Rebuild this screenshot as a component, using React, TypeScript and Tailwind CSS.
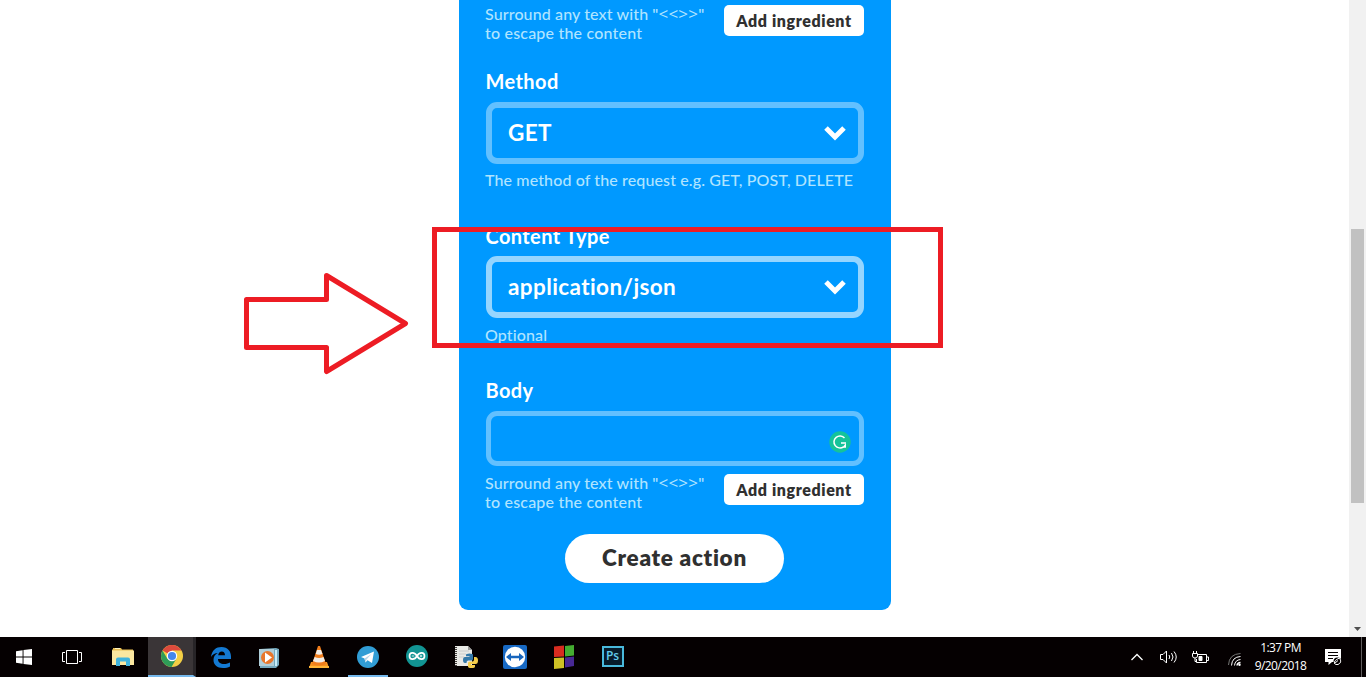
import type { ReactNode } from "react";

function Help({ children }: { children: ReactNode }) {
  return (
    <p className="-mt-px mb-px -ml-px text-[16px] leading-[19px] font-medium tracking-[0.12px] whitespace-nowrap text-[#b0e4ff] [font-variant-ligatures:none]">
      {children}
    </p>
  );
}

function Label({ children }: { children: ReactNode }) {
  return (
    <div className="-mt-px mb-px -ml-[0.5px] h-6 text-[20px] leading-6 font-bold tracking-[0.4px] whitespace-nowrap text-white">
      {children}
    </div>
  );
}

function Select({ value, active }: { value: string; active?: boolean }) {
  return (
    <button
      className={`flex h-[62px] w-full items-center justify-between rounded-[11px] border-6 pr-3 pl-4 text-[22.5px] font-bold text-white ${
        active ? "border-[#95d5ff]" : "border-[#62c0ff]"
      }`}
    >
      <span className="-mt-px tracking-[0.4px] [font-variant-ligatures:none]">{value}</span>
      <svg width="22" height="16" viewBox="0 0 22 16" fill="none" stroke="white" strokeWidth="5">
        <path d="M2 3 11 12 20 3" />
      </svg>
    </button>
  );
}

function IngredientRow() {
  return (
    <div className="flex h-[38px] items-start justify-between">
      <Help>
        Surround any text with "
        <span className="font-['Open_Sans',sans-serif] text-[17px] leading-none font-normal tracking-[0.2px]">&lt;&lt;&gt;&gt;</span>"
        <br />
        <span className="tracking-[0.2px]">to escape the content</span>
      </Help>
      <button className="h-[31px] w-[140px] shrink-0 rounded-[5px] bg-white text-[16px] font-extrabold tracking-[0.6px] whitespace-nowrap text-[#303030]">
        Add ingredient
      </button>
    </div>
  );
}

function TaskItem({ children, className = "" }: { children: ReactNode; className?: string }) {
  return <div className={`flex h-10 w-[49px] shrink-0 items-center justify-center ${className}`}>{children}</div>;
}

function Taskbar() {
  return (
    <footer className="flex h-10 items-center bg-[#050001] text-white">
      <TaskItem className="pr-px">
        <svg width="16" height="16" viewBox="0 0 16 16" fill="white">
          <path d="M0 2.2 6.6 1.2V7.6H0ZM7.5 1 16 0V7.6H7.5ZM0 8.4H6.6V14.8L0 13.8ZM7.5 8.4H16V16L7.5 15Z" />
        </svg>
      </TaskItem>
      <TaskItem className="pr-1">
        <svg width="20" height="14" viewBox="0 0 20 14" fill="none" stroke="white">
          <path d="M4.5.5H15.500V13.500H4.500ZM3 2.500H.5V11.500H3M17 2.500H19.500V11.500H17" />
        </svg>
      </TaskItem>
      <TaskItem>
        <svg width="22" height="18" viewBox="0 0 22 18">
          <path d="M0 1.500H1V0H9L10 1.500H21V16.500H0Z" fill="#e9bf55" />
          <path d="M0 2.500H22V17H0Z" fill="#fbe7a0" />
          <path d="M4 18V11.500Q4 9.500 6 9.500H16Q18 9.500 18 11.500V18H14V13.500H8V18Z" fill="#40b3dd" />
          <path d="M3 0H8V1H3Z" fill="#fff5c4" />
        </svg>
      </TaskItem>
      <TaskItem className="mx-px w-12! border-r-3 border-b-2 border-r-[#272427] border-b-[#76b9ed] bg-[#3a3537] pl-0.5">
        <svg width="22" height="22" viewBox="0 0 22 22">
          <circle cx="11" cy="11" r="11" fill="#f3cf45" />
          <path d="M11 11 1.500 5.500A11 11 0 0 1 20.500 5.500H11Z" fill="#dc4a3d" />
          <path d="M1.500 5.500A11 11 0 0 0 10.500 22L15.500 13.500 11 11 6.500 14Z" fill="#2e9c58" />
          <circle cx="11" cy="11" r="5.200" fill="white" />
          <circle cx="11" cy="11" r="4.100" fill="#4387ec" />
        </svg>
      </TaskItem>
      <TaskItem className="pr-0.5">
        <svg width="20" height="21" viewBox="0 0 20 21">
          <path
            d="M0 10C1 3 5 0 10.500 0C17 0 20 4.500 20 9.500V12H7C7 15.500 9.500 17 13 17C15.500 17 17.500 16.200 19 15.400V19.400C17 20.500 14.800 21 12 21C6 21 2.500 17.500 2.500 13C2.500 9.800 4 7.500 6.800 6C4.300 6.300 1.500 7.300 0 10ZM7.200 8.300H14C14 6 12.800 4.500 10.800 4.500C8.800 4.500 7.500 6.200 7.200 8.300Z"
            fill="#1479d2"
          />
        </svg>
      </TaskItem>
      <TaskItem className="pt-0.5 pr-1">
        <svg width="20" height="20" viewBox="0 0 20 20">
          <path d="M1 1 17 0 20 1V17L17 20H1Z" fill="#75a9be" />
          <path d="M16 2H18V18H16Z" fill="#c8edf8" />
          <path d="M0 1H15V18H0Z" fill="#afcdd8" />
          <circle cx="8.500" cy="9.500" r="6.500" fill="#e8772b" />
          <path d="M6 4.500 13 9.500 6 14.500Z" fill="white" />
        </svg>
      </TaskItem>
      <TaskItem className="pr-0.5">
        <svg width="20" height="22" viewBox="0 0 20 22">
          <path d="M2 16H18L20 22H0Z" fill="#f5921f" />
          <path d="M9 0H11L17 18Q10 21 3 18Z" fill="#f07d1c" />
          <path d="M8 4H12L13.500 8Q10 9.500 6.700 8ZM5.700 11Q10 13 14.500 11L16 15Q10 18 4 15Z" fill="#f1eee9" />
          <path d="M0 20H20V22H0Z" fill="#ffb537" />
        </svg>
      </TaskItem>
      <TaskItem className="ml-1 w-10! border-b-2 border-[#76b9ed] pt-0.5">
        <svg width="22" height="22" viewBox="0 0 22 22">
          <circle cx="11" cy="11" r="11" fill="#319dd5" />
          <path d="M4 11 17 5.500 15 17 10.500 14.200 8.500 16.500 7.500 12.500Z" fill="white" />
          <path d="M7.500 12.500 14.500 8 9.500 13.500 8.500 16.500Z" fill="#b8d5e7" />
        </svg>
      </TaskItem>
      <TaskItem className="ml-1 pb-0.5">
        <svg width="22" height="22" viewBox="0 0 22 22">
          <circle cx="11" cy="11" r="11" fill="#129493" />
          <path
            d="M11 11C8.700 6.800 3.500 7 3.500 11S8.700 15.200 11 11C13.300 6.800 18.500 7 18.500 11S13.300 15.200 11 11Z"
            fill="none"
            stroke="white"
            strokeWidth="1.700"
          />
          <path d="M5.800 11H8.200M13.800 11H16.200M15 9.800V12.200" stroke="white" strokeWidth=".8" />
        </svg>
      </TaskItem>
      <TaskItem>
        <svg width="24" height="24" viewBox="0 0 24 24">
          <path d="M1 1H14L18 5V21H1Z" fill="#e9e9e6" />
          <path d="M14 1V5H18Z" fill="#999" />
          <path d="M2 2V21" stroke="#45413d" strokeWidth="2" strokeDasharray="1 1" />
          <path d="M5 6H15M5 9H12M5 12H10" stroke="#ccc" />
          <path d="M12 10Q12 8.500 15.500 8.500T19 10V14Q19 15.500 17 15.500H14Q12.500 15.500 12.500 18H11Q9 18 9 15T11 12H15.500V11.300H12Z" fill="#3478a9" />
          <path d="M20 12H21.500Q24 12 24 15.500T21.500 19H17V20H21V21.500Q21 23 17.500 23T14 21.500V18Q14 16.500 16 16.500H18.500Q20 16.500 20 14.500Z" fill="#f5cd4c" />
        </svg>
      </TaskItem>
      <TaskItem className="pl-px">
        <svg width="24" height="24" viewBox="0 0 24 24">
          <rect width="24" height="24" rx="2" fill="#1869c4" />
          <circle cx="12" cy="12" r="10.200" fill="white" />
          <path d="M3 12 8 8V10.700H16V8L21 12 16 16V13.300H8V16Z" fill="#1765bd" />
        </svg>
      </TaskItem>
      <TaskItem>
        <svg width="22" height="24" viewBox="0 0 22 24">
          <path d="M1 1.500 11 .5V11.500L1 12Z" fill="#d92c20" />
          <path d="M12 1 21 0V10.500L12 11.500Z" fill="#45ac31" />
          <path d="M1 13 11 12.500V23L1 24Z" fill="#cfc125" />
          <path d="M12 12.500 21 11.500V21L12 22.500Z" fill="#482894" />
        </svg>
      </TaskItem>
      <TaskItem className="pb-0.5">
        <div className="flex h-[21px] w-[22px] items-center justify-center border-2 border-[#49b9dc] bg-[#071b2a] font-['Open_Sans',sans-serif] text-[12px] font-semibold text-[#62cced]">
          Ps
        </div>
      </TaskItem>

      <div className="ml-auto flex h-10 items-center font-['Open_Sans',sans-serif]">
        <svg className="mr-[17px]" width="12" height="8" viewBox="0 0 12 8" fill="none" stroke="white" strokeWidth="1.300">
          <path d="M.5 7 6 1.500 11.500 7" />
        </svg>
        <svg className="mr-3.5" width="18" height="14" viewBox="0 0 18 14" fill="none" stroke="white">
          <path d="M.5 4.500H3L6.500 1V13L3 9.500H.5ZM9 5Q10.500 7 9 9M11.500 3Q14.500 7 11.500 11M14 1.500Q18.500 7 14 12.500" />
        </svg>
        <svg className="mr-[19px]" width="17" height="13" viewBox="0 0 17 13" fill="none" stroke="white">
          <path d="M6 3.500H14.500V11.500H4.500V8M14.500 6H16.500V9.500H14.500M1.500 0V2.500M4.500 0V2.500M.5 2.500H5.500V5Q5.500 7 3 7T.5 5ZM3 7V10.500H5" />
          <path d="M7 5.500H10V9.500H7Z" fill="white" />
        </svg>
        <svg className="mt-1 mr-[13px]" width="13" height="13" viewBox="0 0 13 13" fill="none" stroke="white">
          <path d="M.5 12Q1 1 12.500.5" stroke="#777" />
          <path d="M3.500 12.500Q4 4 12.500 3.500M6.500 12.500Q7 7 12.500 6.500" />
          <path d="M9 12.500Q9.500 9.500 12.500 9.500" strokeWidth="1.500" />
          <circle cx="11.500" cy="11.700" r="1.200" fill="white" stroke="none" />
        </svg>
        <div className="mr-[18px] flex w-[53px] flex-col items-center text-[12px] leading-[18px] tracking-[-0.6px] whitespace-nowrap">
          <span>1:37 PM</span>
          <span>9/20/2018</span>
        </div>
        <svg className="mr-[19px]" width="17" height="17" viewBox="0 0 17 17">
          <path d="M0 0H16V13H7L3.500 16V13H0Z" fill="white" />
          <path d="M3 3.500H13M3 6.500H13M3 9.500H8" stroke="#050001" />
          <circle cx="12.500" cy="12.500" r="4" fill="#050001" />
          <path d="M9.500 14.500Q8.500 11.500 14.500 9Q17.500 13.500 13 15.500Q10.500 16 9.500 14.500L13 11.500" fill="none" stroke="white" />
        </svg>
        <div className="mr-1 h-10 w-px bg-[#5f5c5d]" />
      </div>
    </footer>
  );
}

export default function App() {
  return (
    <div className="relative flex h-[677px] w-[1366px] flex-col overflow-hidden bg-white font-[Lato,sans-serif]">
      <div className="flex h-[637px]">
        <main className="flex w-[1349px] items-start justify-center pl-px">
          <section className="flex h-[610px] w-[432px] flex-col rounded-b-[9px] bg-[#0099ff] px-[27px] pt-[5px]">
            <IngredientRow />
            <div className="flex h-[59px] flex-col justify-end pb-2">
              <Label>Method</Label>
            </div>
            <Select value="GET" />
            <div className="flex h-[26px] flex-col justify-end">
              <Help>The method of the request e.g. GET, POST, DELETE</Help>
            </div>
            <div className="flex h-[66px] flex-col justify-end pb-[7px]">
              <Label>Content Type</Label>
            </div>
            <Select value="application/json" active />
            <div className="flex h-[27px] flex-col justify-end">
              <Help>Optional</Help>
            </div>
            <div className="flex h-[66px] flex-col justify-end pb-2">
              <Label>Body</Label>
            </div>
            <div className="flex h-[55px] shrink-0 items-center justify-end rounded-[11px] border-5 border-[#62c0ff] pt-[7px] pr-2">
              <svg width="22" height="22" viewBox="0 0 22 22">
                <circle cx="11" cy="11" r="10.700" fill="#15c39a" />
                <path d="M15.500 7A6 6 0 1 0 14.500 15.800M12 12H17" fill="none" stroke="white" strokeWidth="1.500" />
                <path d="M13.200 16.800 17 12V16.800Z" fill="white" />
              </svg>
            </div>
            <div className="pt-2">
              <IngredientRow />
            </div>
            <button className="mt-[22px] ml-[79px] h-[49px] w-[219px] shrink-0 rounded-full bg-white pb-px text-[22.5px] font-extrabold tracking-[0.7px] text-[#303030]">
              Create action
            </button>
          </section>
        </main>
        <div className="flex w-[17px] flex-col items-center bg-[#f1f1f1]">
          <div className="mt-[229px] h-[274px] w-[13px] bg-[#c1c1c1]" />
          <svg className="mt-auto mb-1.5" width="7" height="4" viewBox="0 0 7 4">
            <path d="M0 0H7L3.500 4Z" fill="#505050" />
          </svg>
        </div>
      </div>
      <Taskbar />
      <div className="absolute top-[227px] left-[432px] h-[121px] w-[511px] border-5 border-[#ed1c24]" />
      <svg
        className="absolute top-[270px] left-[242px]"
        width="168"
        height="108"
        viewBox="0 0 168 108"
        fill="none"
        stroke="#ed1c24"
        strokeWidth="5"
        strokeLinejoin="round"
      >
        <path d="M4.500 29.500H84.500V5.500L163.500 53.500 84.500 101.500V77.500H4.500Z" />
      </svg>
    </div>
  );
}
